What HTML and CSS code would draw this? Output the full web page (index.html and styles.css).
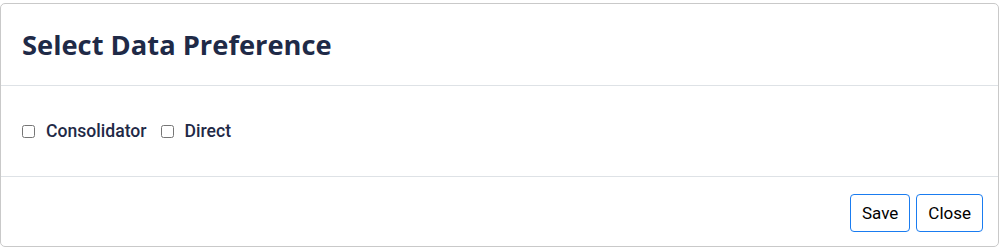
FILE: index.html
```html
<!DOCTYPE html>
<html lang="en">
<head>
    <meta charset="UTF-8">
    <meta name="viewport" content="width=device-width, initial-scale=1.0">
    <title>Select Data Preference</title>
    <link rel="stylesheet" href="styles.css">
</head>
<body>

    <div class="modal-content">
        <!-- Header -->
        <div class="modal-header">
            <h4 class="modal-title">Select Data Preference</h4>
        </div>

        <!-- Options -->
        <div class="modal-body">
            <label class="option">
                <input type="checkbox" name="pref" value="consolidator">
                <span>Consolidator</span>
            </label>
            <label class="option">
                <input type="checkbox" name="pref" value="direct">
                <span>Direct</span>
            </label>
        </div>

        <!-- Footer -->
        <div class="modal-footer">
            <button type="button" class="btn">Save</button>
            <button type="button" class="btn">Close</button>
        </div>
    </div>

</body>
</html>
```

FILE: styles.css
```css
body {
    margin: 0;
    padding-top: 3px;
    font-family: Roboto, "Liberation Sans", sans-serif;
    background: #fff;
}

.modal-content {
    width: 999px;
    box-sizing: border-box;
    border: 1px solid #c9c9c9;
    border-radius: 5px;
    background: #fff;
}

.modal-header {
    padding: 24px 21px;
    border-bottom: 1px solid #dee2e6;
}

.modal-title {
    margin: 0;
    font-family: "Open Sans", sans-serif;
    font-size: 27.3px;
    font-weight: 700;
    line-height: 33px;
    color: #1f2a47;
}

.modal-body {
    display: flex;
    align-items: center;
    gap: 14px;
    padding: 33px 21px;
    line-height: 24px;
}

.option {
    display: flex;
    align-items: center;
    font-size: 17.6px;
    font-weight: 500;
    color: #1f2a47;
}

.option input {
    width: 13px;
    height: 13px;
    margin: 1px 11px 0 0;
}

.modal-footer {
    display: flex;
    justify-content: flex-end;
    gap: 6px;
    padding: 17px 15px 14px;
    border-top: 1px solid #dee2e6;
}

.btn {
    height: 38px;
    padding: 0 11px;
    font-family: Roboto, sans-serif;
    font-size: 17px;
    color: #000;
    background: #fff;
    border: 1px solid #1a7cf0;
    border-radius: 4px;
    cursor: pointer;
}
```
